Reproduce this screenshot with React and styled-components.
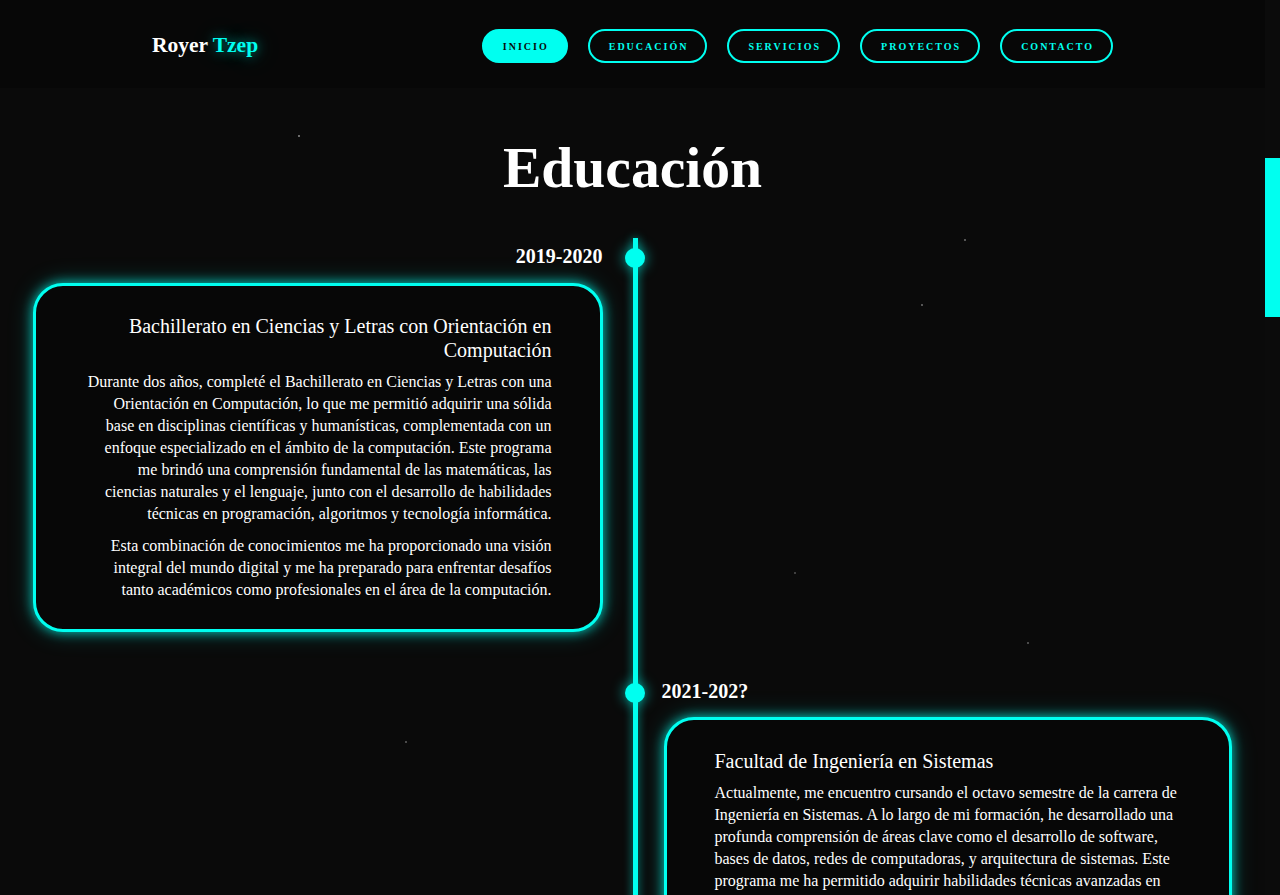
import React from "react";
import styled, { createGlobalStyle } from "styled-components";

const CYAN = "#00fff0";

const GlobalStyle = createGlobalStyle`
  html, body {
    margin: 0;
    padding: 0;
    background: #0a0a0a;
    color: #ffffff;
    font-family: "Liberation Serif", "Times New Roman", serif;
  }
  * { box-sizing: border-box; }
`;

const Frame = styled.div`
  display: flex;
  height: 100vh;
  overflow: hidden;
  background: #0a0a0a;
`;

const Page = styled.div`
  position: relative;
  flex: 1;
  min-width: 0;
  overflow: hidden;
`;

const Star = styled.span`
  position: absolute;
  width: 2px;
  height: 2px;
  border-radius: 50%;
  background: #9a9a9a;
  opacity: ${(p) => p.$o || 0.8};
`;

const Header = styled.header`
  position: relative;
  z-index: 1;
  height: 88px;
  padding: 0 152px;
  display: flex;
  align-items: center;
  justify-content: space-between;
  background: #070707;
`;

const Logo = styled.div`
  font-size: 21.5px;
  font-weight: 700;
  color: #ffffff;
  margin-top: 2px;
`;

const LogoAccent = styled.span`
  color: ${CYAN};
  text-shadow: 0 0 12px rgba(0, 255, 240, 0.55), 0 0 28px rgba(0, 255, 240, 0.3);
`;

const Nav = styled.nav`
  display: flex;
  gap: 20px;
  margin-top: 4px;
`;

const NavButton = styled.a`
  display: inline-flex;
  align-items: center;
  justify-content: center;
  height: 34px;
  padding: 0 17px 0 19px;
  border: 2px solid ${CYAN};
  border-radius: 17px;
  font-size: 10px;
  font-weight: 700;
  letter-spacing: 2px;
  text-transform: uppercase;
  text-decoration: none;
  color: ${(p) => (p.$active ? "#0a0a0a" : CYAN)};
  background: ${(p) => (p.$active ? CYAN : "transparent")};
`;

const Section = styled.section`
  position: relative;
  z-index: 1;
`;

const Title = styled.h2`
  margin: 45px 0 36px;
  text-align: center;
  font-size: 57.6px;
  line-height: 69px;
  font-weight: 700;
  color: #ffffff;
`;

const Timeline = styled.div`
  position: relative;
  padding: 6px 33px 40px;

  &::before {
    content: "";
    position: absolute;
    top: 0;
    bottom: 0;
    left: 50%;
    width: 5px;
    background: ${CYAN};
    box-shadow: 0 0 10px rgba(0, 255, 240, 0.6);
  }
`;

const Item = styled.div`
  position: relative;
  width: 50%;
  margin-left: ${(p) => (p.$side === "right" ? "50%" : "0")};
  padding: ${(p) => (p.$side === "right" ? "0 0 0 31px" : "0 30px 0 0")};
  margin-top: ${(p) => (p.$first ? "0" : "47px")};
`;

const Dot = styled.span`
  position: absolute;
  top: 4px;
  ${(p) => (p.$side === "right" ? "left: -7.5px;" : "right: -12.5px;")}
  width: 20px;
  height: 20px;
  border-radius: 50%;
  background: ${CYAN};
  box-shadow: 0 0 14px rgba(0, 255, 240, 0.7);
`;

const Year = styled.h3`
  margin: 0;
  font-size: 20px;
  line-height: 24px;
  font-weight: 700;
  color: #ffffff;
  text-align: ${(p) => (p.$side === "right" ? "left" : "right")};
  margin-left: ${(p) => (p.$side === "right" ? "-2px" : "0")};
`;

const Card = styled.div`
  margin-top: ${(p) => (p.$side === "right" ? "14px" : "15px")};
  padding: ${(p) => (p.$side === "right" ? "29px 48px 28px" : "28px 48px 28px")};
  border: 3px solid ${CYAN};
  border-radius: 30px;
  background: #070707;
  box-shadow: 0 0 12px rgba(0, 255, 240, 0.75), 0 0 24px rgba(0, 255, 240, 0.25);
  text-align: ${(p) => (p.$side === "right" ? "left" : "right")};
`;

const CardTitle = styled.h4`
  margin: 0 0 9px;
  font-size: 20px;
  line-height: 24px;
  font-weight: 400;
  color: #ffffff;
`;

const Paragraph = styled.p`
  margin: 0 0 10px;
  font-size: 16px;
  line-height: 22px;
  color: #ffffff;

  &:last-child {
    margin-bottom: 0;
  }
`;

const ScrollRail = styled.div`
  flex: 0 0 15px;
  height: 100%;
  background: #0b0b0b;
  padding-top: 158px;
`;

const ScrollThumb = styled.div`
  width: 15px;
  height: 159px;
  background: ${CYAN};
`;

const stars = [
  { x: 298, y: 135, o: 0.9 },
  { x: 964, y: 239, o: 0.7 },
  { x: 921, y: 304, o: 0.7 },
  { x: 794, y: 572, o: 0.5 },
  { x: 1027, y: 642, o: 0.6 },
  { x: 405, y: 741, o: 0.6 },
];

const navItems = [
  { label: "Inicio", active: true },
  { label: "Educación" },
  { label: "Servicios" },
  { label: "Proyectos" },
  { label: "Contacto" },
];

const education = [
  {
    side: "left",
    years: "2019-2020",
    title: "Bachillerato en Ciencias y Letras con Orientación en Computación",
    paragraphs: [
      "Durante dos años, completé el Bachillerato en Ciencias y Letras con una Orientación en Computación, lo que me permitió adquirir una sólida base en disciplinas científicas y humanísticas, complementada con un enfoque especializado en el ámbito de la computación. Este programa me brindó una comprensión fundamental de las matemáticas, las ciencias naturales y el lenguaje, junto con el desarrollo de habilidades técnicas en programación, algoritmos y tecnología informática.",
      "Esta combinación de conocimientos me ha proporcionado una visión integral del mundo digital y me ha preparado para enfrentar desafíos tanto académicos como profesionales en el área de la computación.",
    ],
  },
  {
    side: "right",
    years: "2021-202?",
    title: "Facultad de Ingeniería en Sistemas",
    paragraphs: [
      "Actualmente, me encuentro cursando el octavo semestre de la carrera de Ingeniería en Sistemas. A lo largo de mi formación, he desarrollado una profunda comprensión de áreas clave como el desarrollo de software, bases de datos, redes de computadoras, y arquitectura de sistemas. Este programa me ha permitido adquirir habilidades técnicas avanzadas en programación, análisis y diseño de sistemas, así como en la gestión de proyectos tecnológicos.",
    ],
  },
];

export default function App() {
  return (
    <>
      <GlobalStyle />
      <Frame>
        <Page>
          {stars.map((s, i) => (
            <Star key={i} $o={s.o} style={{ left: s.x, top: s.y }} />
          ))}
          <Header>
            <Logo>
              Royer <LogoAccent>Tzep</LogoAccent>
            </Logo>
            <Nav>
              {navItems.map((n) => (
                <NavButton key={n.label} href="#" $active={n.active}>
                  {n.label}
                </NavButton>
              ))}
            </Nav>
          </Header>
          <Section>
            <Title>Educación</Title>
            <Timeline>
              {education.map((e, i) => (
                <Item key={e.years} $side={e.side} $first={i === 0}>
                  <Dot $side={e.side} />
                  <Year $side={e.side}>{e.years}</Year>
                  <Card $side={e.side}>
                    <CardTitle>{e.title}</CardTitle>
                    {e.paragraphs.map((p, j) => (
                      <Paragraph key={j}>{p}</Paragraph>
                    ))}
                  </Card>
                </Item>
              ))}
            </Timeline>
          </Section>
        </Page>
        <ScrollRail>
          <ScrollThumb />
        </ScrollRail>
      </Frame>
    </>
  );
}
